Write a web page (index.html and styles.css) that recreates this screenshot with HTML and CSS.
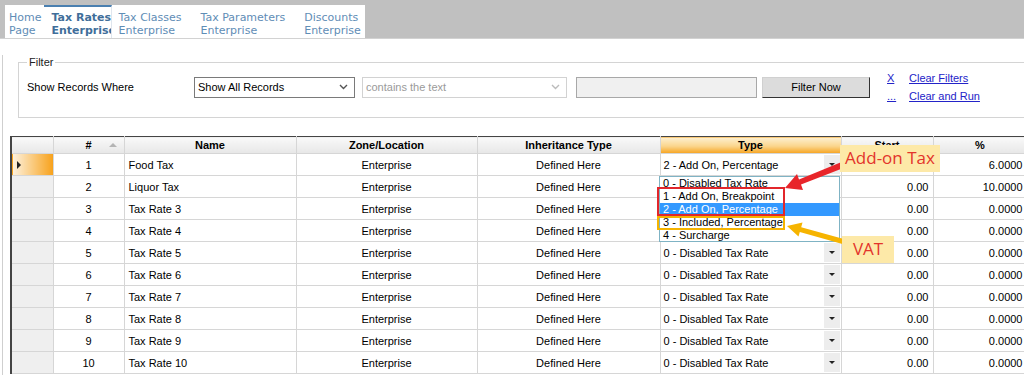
FILE: index.html
```html
<!DOCTYPE html>
<html lang="en">
<head>
  <meta charset="UTF-8" />
  <title>Tax Rates - Enterprise</title>
  <link rel="stylesheet" href="styles.css">
</head>
<body>
  <div class="topbar">
    <nav class="tabs">
      <a class="tab tab-home" href="#">Home<br>Page</a>
      <a class="tab active" href="#">Tax Rates<br>Enterprise</a>
      <a class="tab" href="#">Tax Classes<br>Enterprise</a>
      <a class="tab" href="#">Tax Parameters<br>Enterprise</a>
      <a class="tab tab-last" href="#">Discounts<br>Enterprise</a>
    </nav>
  </div>

  <div class="main">
    <fieldset class="filter">
      <legend>Filter</legend>
      <div class="filter-row">
        <span class="filter-label">Show Records Where</span>
        <div class="select">
          <span>Show All Records</span>
          <svg width="9" height="6" viewBox="0 0 9 6"><polyline points="1,1 4.5,4.5 8,1" fill="none" stroke="#555" stroke-width="1.4"/></svg>
        </div>
        <div class="select disabled">
          <span>contains the text</span>
          <svg width="9" height="6" viewBox="0 0 9 6"><polyline points="1,1 4.5,4.5 8,1" fill="none" stroke="#bbb" stroke-width="1.4"/></svg>
        </div>
        <input class="filter-text" type="text">
        <button class="filter-btn">Filter Now</button>
        <div class="filter-links">
          <div><a href="#" class="short">X</a><a href="#">Clear Filters</a></div>
          <div><a href="#" class="short">...</a><a href="#">Clear and Run</a></div>
        </div>
      </div>
    </fieldset>

    <div class="grid-wrap">
      <table class="grid">
        <colgroup>
          <col style="width:42px"><col style="width:71px"><col style="width:172px"><col style="width:181px">
          <col style="width:183px"><col style="width:181px"><col style="width:92px"><col style="width:94px">
        </colgroup>
        <thead>
          <tr>
            <th></th>
            <th class="sort">#<span class="sort-arrow"></span></th>
            <th>Name</th>
            <th>Zone/Location</th>
            <th>Inheritance Type</th>
            <th class="selected-col">Type</th>
            <th>Start</th>
            <th>%</th>
          </tr>
        </thead>
        <tbody id="rows"></tbody>
      </table>

      <svg class="arrows" width="1021" height="238" viewBox="0 0 1021 238">
        <polygon fill="#e8252a" points="782,52 800,54 798,48.5 843,31 841,25 796,43.5 794,38"/>
        <polygon fill="#f6b400" points="784,90 799.5,86.5 798.2,91.2 848,105 846.5,110 796.8,96.1 795.5,100.5"/>
      </svg>

      <ul class="dropdown">
        <li>0 - Disabled Tax Rate</li>
        <li>1 - Add On, Breakpoint</li>
        <li class="hl">2 - Add On, Percentage</li>
        <li>3 - Included, Percentage</li>
        <li>4 - Surcharge</li>
      </ul>
      <div class="mark mark-red"></div>
      <div class="mark mark-yellow"></div>

      <div class="note note-addon">Add-on Tax</div>
      <div class="note note-vat">VAT</div>
    </div>
  </div>

  <script>
    const taxes = [
      { id: 1, name: "Food Tax", type: "2 - Add On, Percentage", start: "0.00", pct: "6.0000" },
      { id: 2, name: "Liquor Tax", type: "0 - Disabled Tax Rate", start: "0.00", pct: "10.0000" },
      { id: 3, name: "Tax Rate 3", type: "0 - Disabled Tax Rate", start: "0.00", pct: "0.0000" },
      { id: 4, name: "Tax Rate 4", type: "0 - Disabled Tax Rate", start: "0.00", pct: "0.0000" },
      { id: 5, name: "Tax Rate 5", type: "0 - Disabled Tax Rate", start: "0.00", pct: "0.0000" },
      { id: 6, name: "Tax Rate 6", type: "0 - Disabled Tax Rate", start: "0.00", pct: "0.0000" },
      { id: 7, name: "Tax Rate 7", type: "0 - Disabled Tax Rate", start: "0.00", pct: "0.0000" },
      { id: 8, name: "Tax Rate 8", type: "0 - Disabled Tax Rate", start: "0.00", pct: "0.0000" },
      { id: 9, name: "Tax Rate 9", type: "0 - Disabled Tax Rate", start: "0.00", pct: "0.0000" },
      { id: 10, name: "Tax Rate 10", type: "0 - Disabled Tax Rate", start: "0.00", pct: "0.0000" }
    ];

    const body = document.getElementById("rows");
    taxes.forEach((t, i) => {
      const tr = document.createElement("tr");
      tr.innerHTML = `
        <td class="rowhead${i === 0 ? " current" : ""}"></td>
        <td class="center">${t.id}</td>
        <td>${t.name}</td>
        <td class="center">Enterprise</td>
        <td class="center">Defined Here</td>
        <td class="type"><div class="combo"><span>${t.type}</span><span class="combo-btn"></span></div></td>
        <td class="num">${t.start}</td>
        <td class="num">${t.pct}</td>
      `;
      body.appendChild(tr);
    });
  </script>
</body>
</html>
```

FILE: styles.css
```css
* {
  box-sizing: border-box;
}

html, body {
  overflow: hidden;
}

body {
  margin: 0;
  font-family: "Liberation Sans", Arial, sans-serif;
  font-size: 11px;
  color: #000;
  background: #fff;
  width: 1024px;
  height: 375px;
}

/* top tab strip */
.topbar {
  background: #c0c0c0;
  height: 39px;
  padding: 5px 0 0 5px;
  border-bottom: 1px solid #d2d2d2;
}

.tabs {
  display: inline-flex;
  background: #fff;
  height: 33px;
}

.tab {
  font-family: "DejaVu Sans", Verdana, sans-serif;
  font-size: 11px;
  line-height: 13px;
  color: #5f8db6;
  text-decoration: none;
  padding: 6px 13px 0 6px;
  white-space: nowrap;
}

.tab-home {
  padding-left: 4px;
  padding-right: 3px;
}

.tab-last {
  padding-right: 4px;
}

.tab.active {
  width: 68px;
  overflow: hidden;
  padding: 4px 0 0 7px;
  border-top: 2px solid #4a7fb0;
  border-right: 1px solid #dfe6ee;
  font-weight: bold;
  color: #3f6e9a;
}

/* main panel */
.main {
  margin-left: 2px;
  border-left: 1px solid #cfcfcf;
  height: 336px;
}

.filter {
  margin: 16px 0 0 15px;
  width: 1040px;
  border: 1px solid #d4d4d4;
  padding: 0 8px 12px 8px;
}

.filter legend {
  padding: 0 2px;
  font-size: 11px;
  line-height: 14px;
  color: #222;
}

.filter-row {
  display: flex;
  align-items: center;
  height: 36px;
}

.filter-label {
  width: 167px;
}

.select {
  width: 161px;
  height: 21px;
  border: 1px solid #7a7a7a;
  display: flex;
  align-items: center;
  justify-content: space-between;
  padding: 0 6px 0 3px;
  background: #fff;
}

.select.disabled {
  width: 205px;
  margin-left: 7px;
  border-color: #d2d2d2;
  color: #9a9a9a;
}

.filter-text {
  width: 181px;
  height: 21px;
  margin: 0 0 0 9px;
  background: #f0f0f0;
  border: 1px solid #a8a8a8;
}

.filter-btn {
  width: 108px;
  height: 21px;
  margin-left: 5px;
  font-family: "Liberation Sans", Arial, sans-serif;
  font-size: 11px;
  background: #dcdcdc;
  border: 1px solid #d0d0d0;
  border-right-color: #333;
  border-bottom-color: #333;
  padding: 0;
}

.filter-links {
  margin-left: 14px;
  line-height: 18px;
}

.filter-links a {
  color: #2323c8;
  text-decoration: underline;
}

.filter-links a.short {
  display: inline-block;
  width: 25px;
  padding-left: 3px;
}

/* grid */
.grid-wrap {
  position: relative;
  margin-top: 18px;
  padding-left: 7px;
}

.grid {
  border-collapse: collapse;
  table-layout: fixed;
  width: 1016px;
  font-size: 11px;
  border-top: 1px solid #444;
  border-left: 2px solid #444;
}

.grid th {
  height: 17px;
  padding: 0;
  font-weight: bold;
  background: linear-gradient(#f9f9f9, #e7e7e7);
  border: 1px solid #d6d6d6;
  border-top: 1px solid #444;
}

.grid th.sort {
  position: relative;
}

.sort-arrow {
  position: absolute;
  right: 7px;
  top: 6px;
  border-left: 4px solid transparent;
  border-right: 4px solid transparent;
  border-bottom: 4px solid #b4b4b4;
}

.grid th.selected-col {
  background: linear-gradient(#fdf0d2, #fbd58c 55%, #f6a31f);
}

.grid td {
  height: 22px;
  padding: 0 4px;
  border: 1px solid #d6d6d6;
  white-space: nowrap;
  overflow: hidden;
}

.grid td.center {
  text-align: center;
}

.grid td.num {
  text-align: right;
}

.grid td.rowhead {
  background: #efefef;
  position: relative;
}

.grid td.rowhead.current {
  background: linear-gradient(to right, #fdf3e2, #f7a21c);
}

.grid td.rowhead.current::before {
  content: "";
  position: absolute;
  left: 5px;
  top: 7px;
  border-top: 4px solid transparent;
  border-bottom: 4px solid transparent;
  border-left: 4px solid #222;
}

.grid td.type {
  padding: 0 1px 0 3px;
}

.combo {
  display: flex;
  align-items: center;
  justify-content: space-between;
}

.combo-btn {
  width: 16px;
  height: 19px;
  background: #ededed;
  position: relative;
}

.combo-btn::after {
  content: "";
  position: absolute;
  left: 5px;
  top: 8px;
  border-left: 3px solid transparent;
  border-right: 3px solid transparent;
  border-top: 3px solid #222;
}

/* dropdown + annotations laid over the grid */
.arrows {
  position: absolute;
  left: 0;
  top: 0;
  z-index: 3;
}

.dropdown {
  position: absolute;
  left: 656px;
  top: 40px;
  width: 181px;
  height: 66px;
  margin: 0;
  padding: 0;
  list-style: none;
  background: #fff;
  border: 1px solid #7fb3c4;
  font-size: 11px;
  line-height: 13px;
  z-index: 2;
}

.dropdown li {
  padding-left: 3px;
  white-space: nowrap;
}

.dropdown li.hl {
  background: #3399ff;
  color: #fff;
}

.mark {
  position: absolute;
  left: 654px;
  width: 128px;
  z-index: 4;
}

.mark-red {
  top: 51px;
  height: 29px;
  border: 2px solid #e2262b;
}

.mark-yellow {
  top: 80px;
  height: 14px;
  border: 2px solid #f6b400;
}

.note {
  position: absolute;
  background: #fde9a8;
  color: #e3342b;
  font-family: "Open Sans", sans-serif;
  font-size: 17px;
  line-height: 26px;
  text-align: center;
  z-index: 5;
}

.note-addon {
  left: 837px;
  top: 9px;
  width: 100px;
  height: 27px;
}

.note-vat {
  left: 839px;
  top: 100px;
  width: 52px;
  height: 27px;
}
```
